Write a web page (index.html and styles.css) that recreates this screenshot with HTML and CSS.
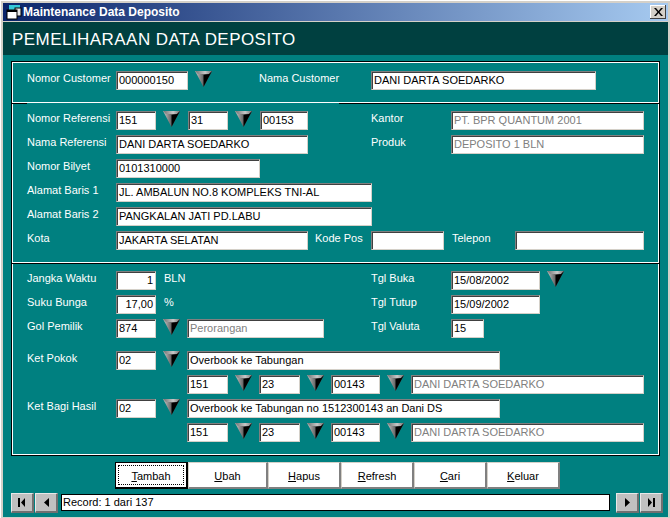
FILE: index.html
```html
<!DOCTYPE html>
<html>
<head>
  <link rel="stylesheet" href="styles.css">
</head>
<body>
  <svg class="defs" width="0" height="0">
    <defs>
      <linearGradient id="wedge" x1="0" y1="0" x2="1" y2="0">
        <stop offset="0" stop-color="#c8c8c8"/>
        <stop offset="0.6" stop-color="#505050"/>
      </linearGradient>
      <linearGradient id="strip" x1="0" y1="0" x2="1" y2="0">
        <stop offset="0" stop-color="#707070"/>
        <stop offset="0.6" stop-color="#c8c8c8"/>
        <stop offset="1" stop-color="#707070"/>
      </linearGradient>
      <symbol id="arrow" viewBox="0 0 17 16">
        <polygon points="0,0 17,0 8.500,16" fill="url(#wedge)"/>
        <polygon points="0,0 17,0 14,3 3,3" fill="url(#strip)"/>
        <polygon points="17,0 8.500,16 8.500,4 14,3" fill="#000"/>
      </symbol>
    </defs>
  </svg>

  <div class="window">
    <div class="titlebar">
      <svg class="app-icon" width="16" height="16" viewBox="0 0 16 16">
        <rect x="3" y="1" width="11" height="6" fill="#35c8d8"/>
        <rect x="9" y="4" width="6" height="8" fill="#e8e8e8" stroke="#000"/>
        <rect x="1" y="6" width="10" height="9" fill="#fff" stroke="#000"/>
        <rect x="1" y="6" width="10" height="2" fill="#000"/>
      </svg>
      <span class="title-text">Maintenance Data Deposito</span>
      <div class="close-btn">
        <svg width="9" height="8" viewBox="0 0 9 8"><path d="M0 0h2l2.500 3L7 0h2L5.500 4 9 8H7L4.500 5 2 8H0l3.500-4z" fill="#000"/></svg>
      </div>
    </div>
    <div class="header">PEMELIHARAAN DATA DEPOSITO</div>

    <div class="content">
      <div class="panel">
        <div class="section sec-customer">
          <div class="row">
            <div class="lbl">Nomor Customer</div>
            <div class="fld w72">000000150</div>
            <svg class="arrow"><use href="#arrow"/></svg>
            <div class="lbl lbl-nama">Nama Customer</div>
            <div class="fld w225">DANI DARTA SOEDARKO</div>
          </div>
        </div>
        <div class="divider partial"></div>

        <div class="section">
          <div class="row">
            <div class="lbl">Nomor Referensi</div>
            <div class="left">
              <div class="fld w40">151</div>
              <svg class="arrow"><use href="#arrow"/></svg>
              <div class="fld w40 ml1">31</div>
              <svg class="arrow"><use href="#arrow"/></svg>
              <div class="fld w48 ml1">00153</div>
            </div>
            <div class="lbl lbl2">Kantor</div>
            <div class="fld w193 off">PT. BPR QUANTUM 2001</div>
          </div>
          <div class="row">
            <div class="lbl">Nama Referensi</div>
            <div class="left"><div class="fld w192">DANI DARTA SOEDARKO</div></div>
            <div class="lbl lbl2">Produk</div>
            <div class="fld w193 off">DEPOSITO 1 BLN</div>
          </div>
          <div class="row">
            <div class="lbl">Nomor Bilyet</div>
            <div class="fld w144">0101310000</div>
          </div>
          <div class="row">
            <div class="lbl">Alamat Baris 1</div>
            <div class="fld w256">JL. AMBALUN NO.8 KOMPLEKS TNI-AL</div>
          </div>
          <div class="row">
            <div class="lbl">Alamat Baris 2</div>
            <div class="fld w256">PANGKALAN JATI PD.LABU</div>
          </div>
          <div class="row">
            <div class="lbl">Kota</div>
            <div class="fld w192">JAKARTA SELATAN</div>
            <div class="lbl lbl-kode">Kode Pos</div>
            <div class="fld w73"></div>
            <div class="lbl lbl-telp">Telepon</div>
            <div class="fld w129"></div>
          </div>
        </div>
        <div class="divider"></div>

        <div class="section">
          <div class="row">
            <div class="lbl">Jangka Waktu</div>
            <div class="left">
              <div class="fld w40 num">1</div>
              <div class="lbl unit">BLN</div>
            </div>
            <div class="lbl lbl2">Tgl Buka</div>
            <div class="fld w89">15/08/2002</div>
            <svg class="arrow"><use href="#arrow"/></svg>
          </div>
          <div class="row">
            <div class="lbl">Suku Bunga</div>
            <div class="left">
              <div class="fld w40 num">17,00</div>
              <div class="lbl unit">%</div>
            </div>
            <div class="lbl lbl2">Tgl Tutup</div>
            <div class="fld w89">15/09/2002</div>
          </div>
          <div class="row">
            <div class="lbl">Gol Pemilik</div>
            <div class="left">
              <div class="fld w40">874</div>
              <svg class="arrow"><use href="#arrow"/></svg>
              <div class="fld w137 off">Perorangan</div>
            </div>
            <div class="lbl lbl2">Tgl Valuta</div>
            <div class="fld w33">15</div>
          </div>
          <div class="row group-start">
            <div class="lbl">Ket Pokok</div>
            <div class="fld w40">02</div>
            <svg class="arrow"><use href="#arrow"/></svg>
            <div class="fld w313">Overbook ke Tabungan</div>
          </div>
          <div class="row sub">
            <div class="fld w41">151</div>
            <svg class="arrow"><use href="#arrow"/></svg>
            <div class="fld w41">23</div>
            <svg class="arrow"><use href="#arrow"/></svg>
            <div class="fld w49">00143</div>
            <svg class="arrow"><use href="#arrow"/></svg>
            <div class="fld w233 off">DANI DARTA SOEDARKO</div>
          </div>
          <div class="row">
            <div class="lbl">Ket Bagi Hasil</div>
            <div class="fld w40">02</div>
            <svg class="arrow"><use href="#arrow"/></svg>
            <div class="fld w313">Overbook ke Tabungan no 1512300143 an Dani DS</div>
          </div>
          <div class="row sub">
            <div class="fld w41">151</div>
            <svg class="arrow"><use href="#arrow"/></svg>
            <div class="fld w41">23</div>
            <svg class="arrow"><use href="#arrow"/></svg>
            <div class="fld w49">00143</div>
            <svg class="arrow"><use href="#arrow"/></svg>
            <div class="fld w233 off">DANI DARTA SOEDARKO</div>
          </div>
        </div>
      </div>

      <div class="actions">
        <div class="btn focus"><span class="focus-ring"><span><u>T</u>ambah</span></span></div>
        <div class="btn wide"><span><u>U</u>bah</span></div>
        <div class="btn"><span><u>H</u>apus</span></div>
        <div class="btn"><span><u>R</u>efresh</span></div>
        <div class="btn"><span><u>C</u>ari</span></div>
        <div class="btn"><span><u>K</u>eluar</span></div>
      </div>

      <div class="nav">
        <div class="nav-btn">
          <svg width="8" height="9" viewBox="0 0 8 9"><path d="M0 0h2v9H0zM7 0v9L3 4.500z" fill="#000"/></svg>
        </div>
        <div class="nav-btn">
          <svg width="5" height="9" viewBox="0 0 5 9"><path d="M5 0v9L0 4.500z" fill="#000"/></svg>
        </div>
        <div class="record">Record: 1 dari 137</div>
        <div class="nav-btn">
          <svg width="5" height="9" viewBox="0 0 5 9"><path d="M0 0v9l5-4.500z" fill="#000"/></svg>
        </div>
        <div class="nav-btn">
          <svg width="8" height="9" viewBox="0 0 8 9"><path d="M1 0v9l4-4.500zM6 0h2v9H6z" fill="#000"/></svg>
        </div>
      </div>
    </div>
  </div>
</body>
</html>
```

FILE: styles.css
```css
* {
  box-sizing: border-box;
}
html, body {
  margin: 0;
  padding: 0;
}
body {
  font-family: "Liberation Sans", Arial, sans-serif;
  font-size: 11px;
  background: #d4d0c8;
}
.defs {
  display: block;
  height: 0;
}
.window {
  width: 670px;
  height: 518px;
  padding: 3px 2px 2px 3px;
  background: #d4d0c8;
  box-shadow: inset 1px 1px 0 #fff;
  overflow: hidden;
}

/* title bar */
.titlebar {
  display: flex;
  align-items: center;
  height: 18px;
  padding: 0 2px 0 3px;
  background: linear-gradient(to right, #0a246a, #a6caf0);
  color: #fff;
  font-weight: bold;
  font-size: 12px;
}
.app-icon {
  margin-right: 1px;
}
.title-text {
  flex: 1;
}
.close-btn {
  display: flex;
  align-items: center;
  justify-content: center;
  width: 16px;
  height: 14px;
  background: #d4d0c8;
  box-shadow: inset -1px -1px 0 #404040, inset 1px 1px 0 #fff;
}
.header {
  height: 33px;
  margin-top: 1px;
  padding: 7px 0 0 9px;
  background: #004040;
  color: #fff;
  font-size: 17px;
  line-height: 22px;
  letter-spacing: 0.450px;
}

/* body of the form */
.content {
  height: 462px;
  padding: 6px 0 0 8px;
  background: #008080;
}
.panel {
  width: 649px;
  border: 1px solid #000;
  box-shadow: inset 0 0 0 1px #fff;
  padding: 1px;
  color: #fff;
}
.section {
  display: flex;
  flex-direction: column;
  gap: 5px;
  padding: 7px 0 12px 14px;
}
.sec-customer {
  padding-top: 8px;
}
.divider {
  height: 2px;
  margin: 0 -1px;
  background: linear-gradient(to bottom, #fff 1px, #000 1px);
}
.divider.partial {
  background:
    linear-gradient(to bottom, #fff 1px, transparent 1px),
    linear-gradient(to right, #000 15px, transparent 15px, transparent 327px, #000 327px);
}
.row {
  display: flex;
  align-items: flex-start;
  height: 19px;
}
.group-start {
  margin-top: 8px;
}
.sub {
  padding-left: 160px;
}
.left {
  display: flex;
  flex: none;
  width: 255px;
}

/* labels */
.lbl {
  flex: none;
  width: 89px;
  line-height: 15px;
  white-space: nowrap;
}
.lbl2 {
  width: 80px;
}
.lbl-nama {
  width: 112px;
  margin-left: 40px;
}
.lbl-kode {
  width: 56px;
  margin-left: 7px;
}
.lbl-telp {
  width: 63px;
  margin-left: 8px;
}
.unit {
  width: auto;
  margin-left: 8px;
}

/* sunken edit boxes */
.fld {
  flex: none;
  height: 19px;
  padding: 1px 2px 0 2px;
  background: #fff;
  color: #000;
  line-height: 15px;
  white-space: nowrap;
  overflow: hidden;
  border-top: 1px solid #808080;
  border-left: 1px solid #808080;
  border-right: 1px solid #d4d0c8;
  border-bottom: 1px solid #d4d0c8;
  box-shadow: inset 1px 1px 0 #404040;
}
.off {
  color: #808080;
}
.num {
  text-align: right;
}
.ml1 {
  margin-left: 1px;
}
.w33 { width: 33px; }
.w40 { width: 40px; }
.w41 { width: 41px; }
.w48 { width: 48px; }
.w49 { width: 49px; }
.w72 { width: 72px; }
.w73 { width: 73px; }
.w89 { width: 89px; }
.w129 { width: 129px; }
.w137 { width: 137px; }
.w144 { width: 144px; }
.w192 { width: 192px; }
.w193 { width: 193px; }
.w225 { width: 225px; }
.w233 { width: 233px; }
.w256 { width: 256px; }
.w313 { width: 313px; }

.arrow {
  flex: none;
  width: 17px;
  height: 16px;
  margin: 0 7px;
}

/* command buttons */
.actions {
  display: flex;
  margin: 6px 0 0 104px;
}
.btn {
  display: flex;
  align-items: center;
  justify-content: center;
  width: 73px;
  height: 27px;
  padding-top: 2px;
  background: #fff;
  color: #000;
  border-top: 1px solid #d4d0c8;
  border-left: 1px solid #d4d0c8;
  border-right: 2px solid #808080;
  border-bottom: 2px solid #808080;
}
.btn.wide {
  width: 80px;
}
.btn.focus {
  border: 1px solid #000;
  border-right-width: 2px;
  border-bottom-width: 2px;
  padding: 2px;
}
.focus-ring {
  display: flex;
  justify-content: center;
  align-items: center;
  width: 100%;
  height: 100%;
  padding-top: 1px;
  border: 1px dotted #000;
}

/* record navigator */
.nav {
  display: flex;
  align-items: flex-start;
  margin-top: 4px;
}
.nav-btn {
  display: flex;
  align-items: center;
  justify-content: center;
  width: 23px;
  height: 20px;
  margin-right: 1px;
  background: #c0c0c0;
  border-top: 1px solid #e8e8e8;
  border-left: 1px solid #e8e8e8;
  border-right: 2px solid #707070;
  border-bottom: 2px solid #707070;
}
.record {
  width: 549px;
  height: 17px;
  margin: 1px 6px 0 2px;
  padding-left: 1px;
  background: #fff;
  color: #000;
  border: 1px solid #000;
  line-height: 14px;
}
```
